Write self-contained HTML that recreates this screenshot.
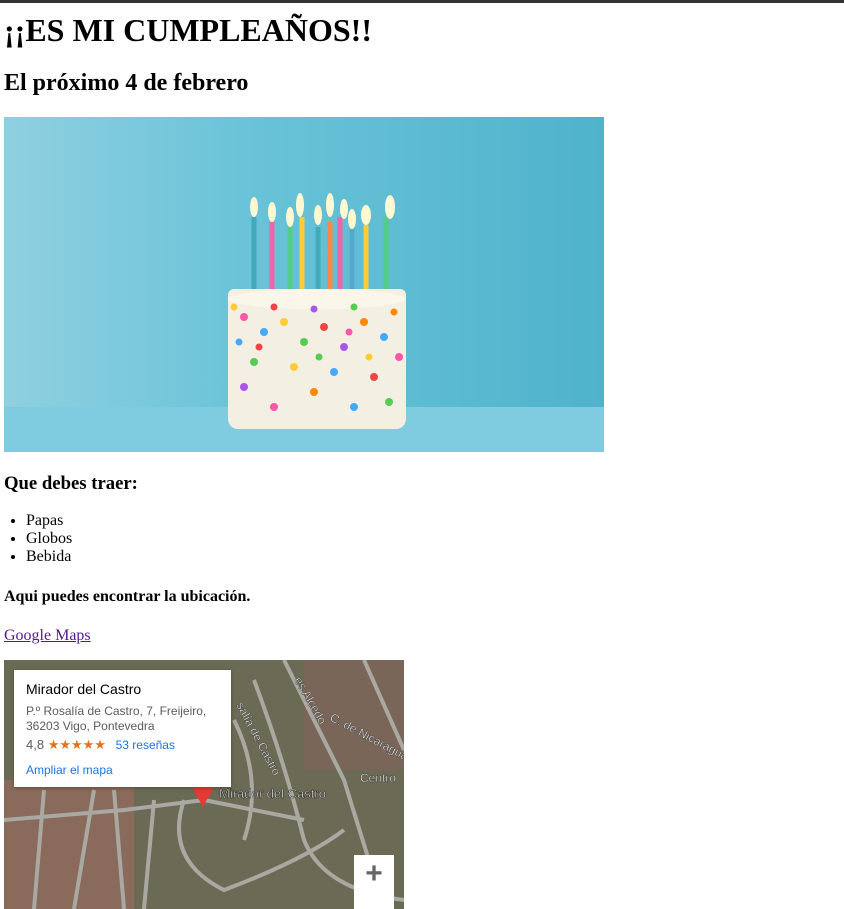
<!DOCTYPE html>
<html><head><meta charset="utf-8">
<style>
html,body{margin:0;padding:0;background:#fff;width:844px;height:909px;overflow:hidden;position:relative;font-family:"Liberation Serif",serif;color:#000}
.t{position:absolute;left:4px;margin:0;white-space:nowrap;font-weight:bold}
#bar{position:absolute;left:0;top:0;width:844px;height:3px;background:#333}
#img{position:absolute;left:4px;top:117px;width:600px;height:335px;overflow:hidden;background:linear-gradient(90deg,#8fd0e0 0%,#6ac3d8 40%,#4fb3cc 100%)}
#map{position:absolute;left:4px;top:660px;width:400px;height:249px;overflow:hidden;background:#5d6a4f}
.s{font-family:"Liberation Sans",sans-serif}
</style></head><body>
<div id="bar"></div>
<div class="t" style="top:12px;font-size:32px">¡¡ES MI CUMPLEAÑOS!!</div>
<div class="t" style="top:70px;font-size:24px">El próximo 4 de febrero</div>
<div id="img">
 <div style="position:absolute;left:0;top:290px;width:600px;height:45px;background:#7fcbe0"></div>
 <div style="position:absolute;left:224px;top:172px;width:178px;height:140px;background:#f3efe3;border-radius:6px 6px 10px 10px"></div>
 <div style="position:absolute;left:224px;top:172px;width:178px;height:20px;background:#faf6ea;border-radius:50%"></div>
 <svg style="position:absolute;left:0;top:0" width="600" height="335">
  <g>
  <circle cx="240" cy="200" r="4" fill="#f5a"/><circle cx="260" cy="215" r="4" fill="#4af"/><circle cx="280" cy="205" r="4" fill="#fc3"/><circle cx="300" cy="225" r="4" fill="#5c5"/><circle cx="320" cy="210" r="4" fill="#e44"/><circle cx="340" cy="230" r="4" fill="#a5e"/><circle cx="360" cy="205" r="4" fill="#f80"/><circle cx="380" cy="220" r="4" fill="#4af"/><circle cx="395" cy="240" r="4" fill="#f5a"/><circle cx="250" cy="245" r="4" fill="#5c5"/><circle cx="290" cy="250" r="4" fill="#fc3"/><circle cx="330" cy="255" r="4" fill="#4af"/><circle cx="370" cy="260" r="4" fill="#e44"/><circle cx="240" cy="270" r="4" fill="#a5e"/><circle cx="310" cy="275" r="4" fill="#f80"/><circle cx="385" cy="285" r="4" fill="#5c5"/><circle cx="270" cy="290" r="4" fill="#f5a"/><circle cx="350" cy="290" r="4" fill="#4af"/>
  <circle cx="230" cy="190" r="3.5" fill="#fc3"/><circle cx="270" cy="190" r="3.5" fill="#e44"/><circle cx="310" cy="192" r="3.5" fill="#a5e"/><circle cx="350" cy="190" r="3.5" fill="#5c5"/><circle cx="390" cy="195" r="3.5" fill="#f80"/><circle cx="255" cy="230" r="3.5" fill="#e44"/><circle cx="315" cy="240" r="3.5" fill="#5c5"/><circle cx="365" cy="240" r="3.5" fill="#fc3"/><circle cx="235" cy="225" r="3.5" fill="#4af"/><circle cx="345" cy="215" r="3.5" fill="#f5a"/>
  </g>
  <g stroke-width="5">
  <line x1="250" y1="100" x2="250" y2="172" stroke="#4ab"/><line x1="268" y1="105" x2="268" y2="172" stroke="#e6a"/><line x1="286" y1="110" x2="286" y2="172" stroke="#5c8"/><line x1="298" y1="100" x2="298" y2="172" stroke="#fc3"/><line x1="314" y1="110" x2="314" y2="172" stroke="#4ab"/><line x1="326" y1="105" x2="326" y2="172" stroke="#f84"/><line x1="336" y1="100" x2="336" y2="172" stroke="#e6a"/><line x1="348" y1="112" x2="348" y2="172" stroke="#5ac"/><line x1="362" y1="108" x2="362" y2="172" stroke="#fc3"/><line x1="382" y1="100" x2="382" y2="172" stroke="#5c8"/>
  </g>
  <g fill="#fff8d0"><ellipse cx="250" cy="90" rx="4" ry="10"/><ellipse cx="268" cy="95" rx="4" ry="10"/><ellipse cx="286" cy="100" rx="4" ry="10"/><ellipse cx="296" cy="88" rx="4" ry="12"/><ellipse cx="314" cy="98" rx="4" ry="10"/><ellipse cx="326" cy="88" rx="4" ry="12"/><ellipse cx="340" cy="92" rx="4" ry="10"/><ellipse cx="348" cy="102" rx="4" ry="10"/><ellipse cx="362" cy="98" rx="5" ry="10"/><ellipse cx="386" cy="90" rx="5" ry="12"/></g>
 </svg>
</div>
<div class="t" style="top:473px;font-size:18.7px">Que debes traer:</div>
<ul style="position:absolute;left:4px;top:512px;margin:0;padding-left:22px;font-size:16px;line-height:18px">
<li>Papas</li><li>Globos</li><li>Bebida</li></ul>
<div class="t" style="top:588px;font-size:16px">Aqui puedes encontrar la ubicación.</div>
<a style="position:absolute;left:4px;top:627px;font-size:16px;color:#551a8b;text-decoration:underline">Google Maps</a>
<div id="map">
 <svg width="400" height="249" style="position:absolute;left:0;top:0">
  <rect width="400" height="249" fill="#6b6b55"/>
  <rect x="0" y="120" width="130" height="129" fill="#8a6a5a"/>
  <rect x="300" y="0" width="100" height="110" fill="#7a6658"/>
  <g stroke="#a9a9a2" stroke-width="4" fill="none">
   <path d="M280 0 L340 120 L380 249"/><path d="M0 160 L120 150 L200 140 L300 160"/><path d="M40 130 L30 249"/><path d="M90 130 L70 249"/><path d="M110 130 L120 249"/><path d="M250 20 Q280 100 300 180 Q320 230 400 240"/><path d="M180 140 Q160 200 220 230 Q300 200 340 170"/><path d="M230 60 Q260 120 240 180"/><path d="M360 0 L400 90"/><path d="M150 140 L140 249"/>
  </g>
  <text x="290" y="20" transform="rotate(60 290 20)" font-family="Liberation Sans" font-size="12" fill="#fff" stroke="#333" stroke-width=".4">es Alcedo</text>
  <text x="325" y="60" transform="rotate(28 325 60)" font-family="Liberation Sans" font-size="12" fill="#fff" stroke="#333" stroke-width=".4">C. de Nicaragua</text>
  <text x="232" y="45" transform="rotate(62 232 45)" font-family="Liberation Sans" font-size="12" fill="#fff" stroke="#333" stroke-width=".4">salía de Castro</text>
  <text x="356" y="122" font-family="Liberation Sans" font-size="12" fill="#fff" stroke="#333" stroke-width=".4">Centro</text>
  <path d="M189 126 a10 10 0 0 1 20 0 c0 8 -10 16 -10 24 c0 -8 -10 -16 -10 -24z" fill="#e53935"/>
  <text x="215" y="138" font-family="Liberation Sans" font-size="13" fill="#fff" stroke="#222" stroke-width=".5">Mirador del Castro</text>
 </svg>
 <div class="s" style="position:absolute;left:10px;top:10px;width:217px;height:117px;background:#fff;box-shadow:0 1px 4px rgba(0,0,0,.3)">
  <div style="position:absolute;left:12px;top:11px;font-size:14px;color:#000">Mirador del Castro</div>
  <div style="position:absolute;left:12px;top:34px;font-size:12px;color:#5b5b5b;line-height:15px">P.º Rosalía de Castro, 7, Freijeiro,<br>36203 Vigo, Pontevedra</div>
  <div style="position:absolute;left:12px;top:67px;font-size:13px;color:#5b5b5b">4,8 <span style="color:#e7711b;font-size:13px">★★★★★</span> <span style="color:#1a73e8;font-size:12px;margin-left:6px">53 reseñas</span></div>
  <div style="position:absolute;left:12px;top:93px;font-size:12px;color:#1a73e8">Ampliar el mapa</div>
 </div>
 <div class="s" style="position:absolute;left:350px;top:195px;width:40px;height:54px;background:#fff;font-size:30px;color:#666;text-align:center;line-height:38px;font-weight:bold">+</div>
</div>
</body></html>
